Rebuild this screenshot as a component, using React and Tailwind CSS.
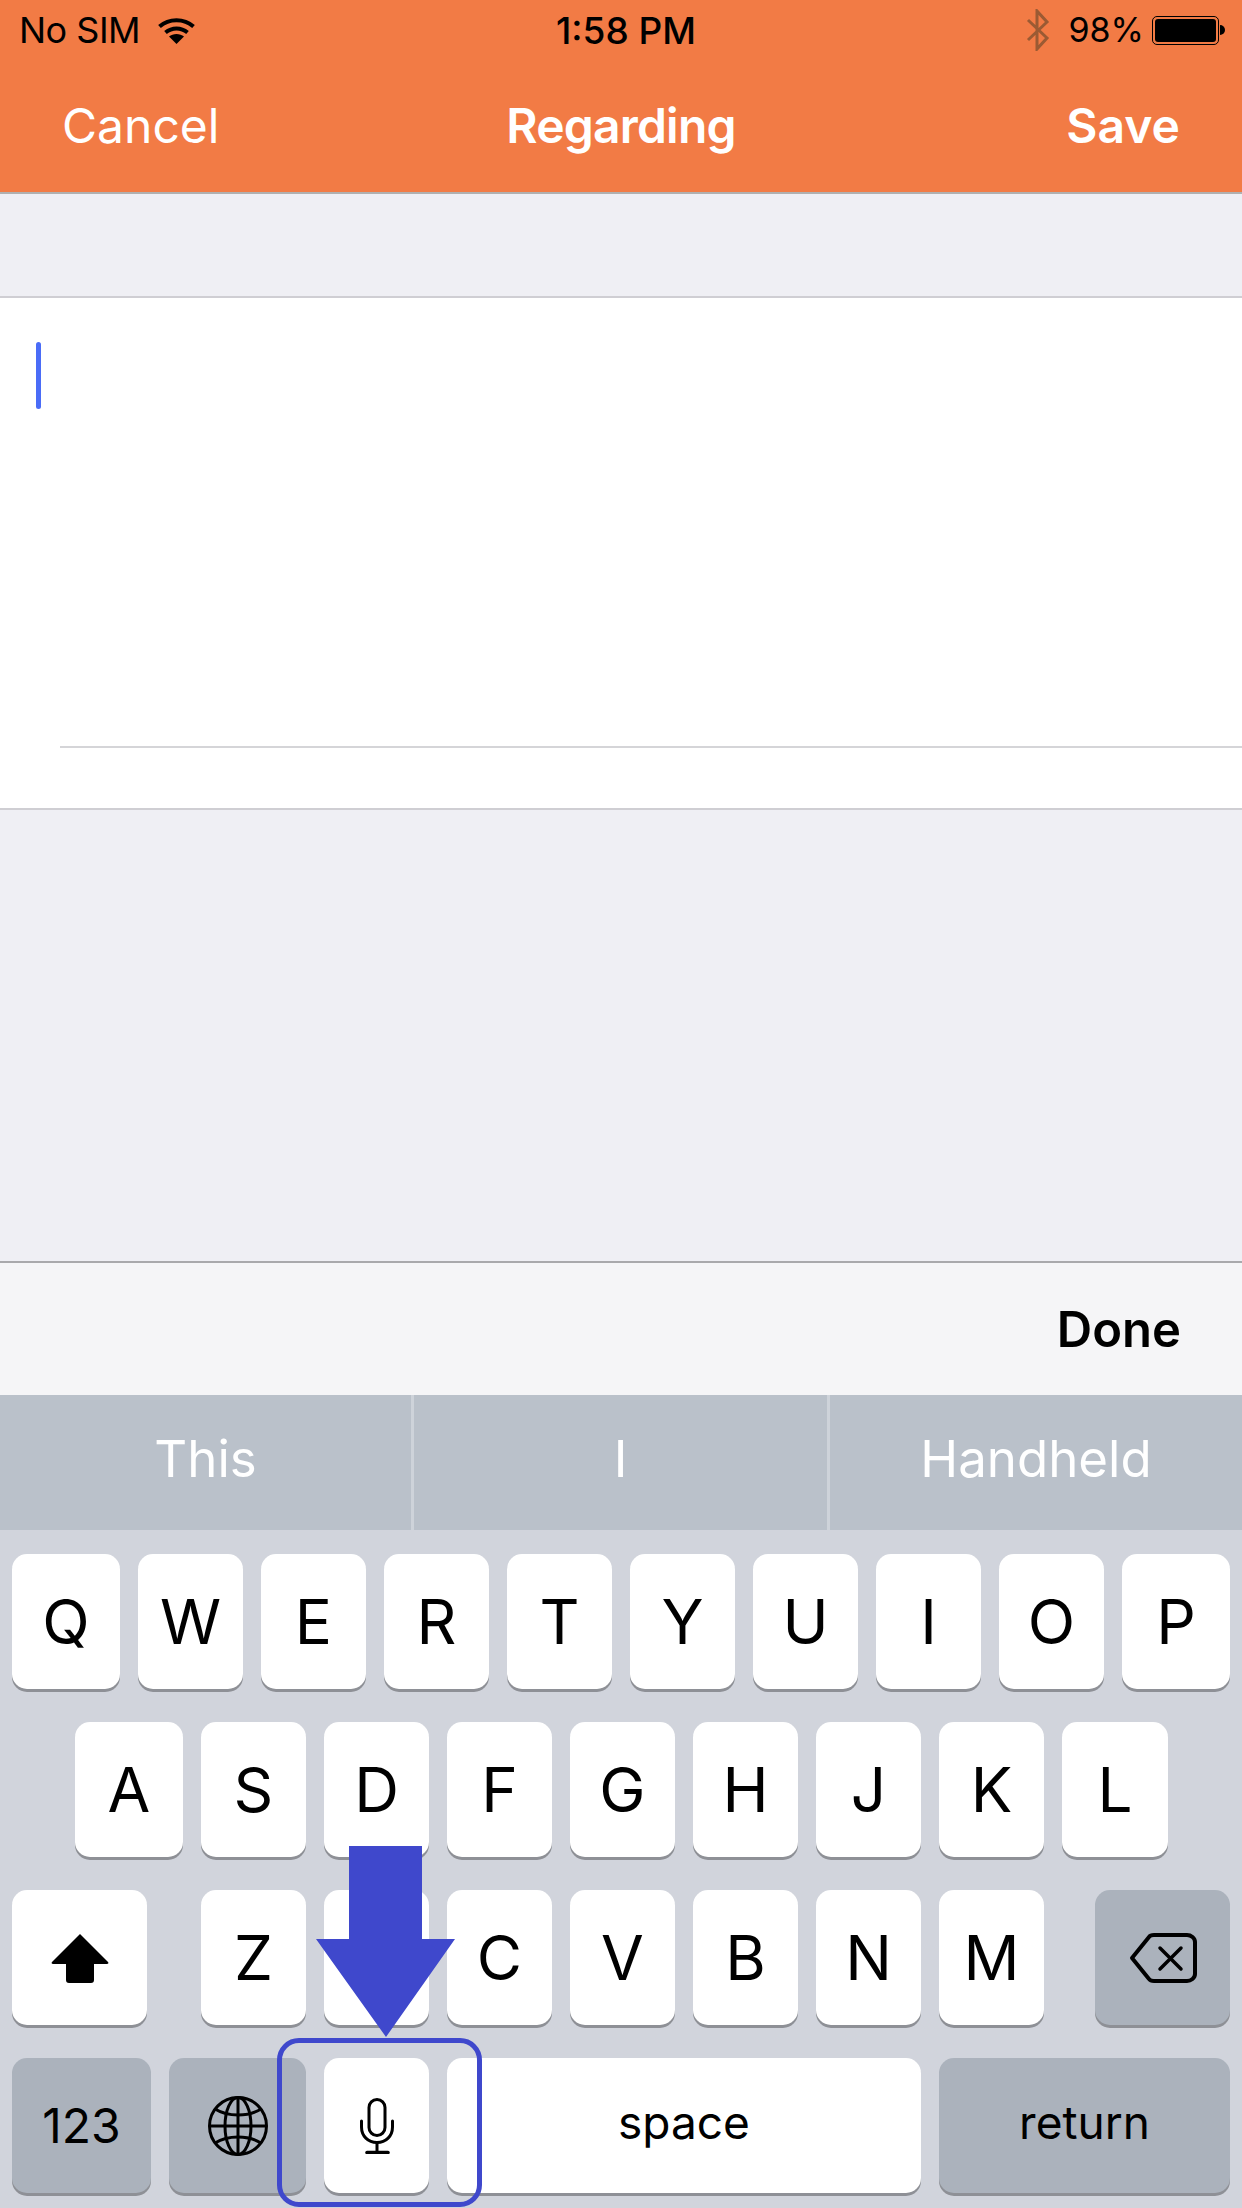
// App.jsx - iOS note editor with keyboard and callout

const FONT = "font-['Inter','Liberation_Sans',sans-serif]";

const Key = ({ label, w = 'w-[105px]', dark = false, size = 'text-[62px]', extra = '', children }) => (
  <div
    className={`${w} h-[135px] rounded-[15px] flex items-center justify-center text-black ${size} ${extra} font-normal leading-none shadow-[0_3px_0_#8e9096] ${
      dark ? 'bg-[#abb2bc]' : 'bg-white'
    }`}
  >
    {children || label}
  </div>
);

const Wifi = () => (
  <svg width="37" height="27" viewBox="0 0 37 27" className="ml-[18px]">
    <path d="M1.5 9.5C11 1 26 1 35.5 9.5" fill="none" stroke="#000" strokeWidth="4" />
    <path d="M7.5 15.5C14 10 23 10 29.5 15.5" fill="none" stroke="#000" strokeWidth="4" />
    <path d="M18.5 27L11 19.5C15 16 22 16 26 19.5Z" fill="#000" />
  </svg>
);

const Bluetooth = () => (
  <svg width="24" height="42" viewBox="0 0 24 42">
    <path d="M2 11L21 29L11 40V2L21 13L2 31" fill="none" stroke="#9b5a33" strokeWidth="3" />
  </svg>
);

const Battery = () => (
  <div className="flex items-center ml-[8px]">
    <div className="w-[67px] h-[29px] rounded-[5px] border border-black p-[2px]">
      <div className="w-full h-full rounded-[3px] bg-black" />
    </div>
    <div className="w-[5px] h-[10px] ml-[1px] rounded-r-full bg-black" />
  </div>
);

const ShiftIcon = () => (
  <svg width="58" height="50" viewBox="0 0 58 50">
    <path
      d="M29 1L57 29C58 30 57 31 56 31H43V47C43 49 42 50 40 50H18C16 50 15 49 15 47V31H2C1 31 0 30 1 29Z"
      fill="#000"
    />
  </svg>
);

const DeleteIcon = () => (
  <svg width="68" height="50" viewBox="0 0 68 50" fill="none" stroke="#000">
    <path
      d="M3 25L20 4C21 2.5 23 2 25 2H58C62 2 66 5 66 9V41C66 45 62 48 58 48H25C23 48 21 47.5 20 46Z"
      strokeWidth="4"
      strokeLinejoin="round"
    />
    <path d="M31 15L52 36M52 15L31 36" strokeWidth="3.5" strokeLinecap="round" />
  </svg>
);

const GlobeIcon = () => (
  <svg width="60" height="60" viewBox="0 0 60 60" fill="none" stroke="#000" strokeWidth="3">
    <circle cx="30" cy="30" r="28.5" />
    <ellipse cx="30" cy="30" rx="13" ry="28.5" />
    <path d="M30 1.5V58.5M1.5 30H58.5" />
    <path d="M7 13C20 21 40 21 53 13M7 47C20 39 40 39 53 47" />
  </svg>
);

const MicIcon = () => (
  <svg width="34" height="56" viewBox="0 0 34 56" fill="none" stroke="#000">
    <rect x="9" y="1.5" width="16" height="36" rx="8" strokeWidth="3" />
    <path d="M1.5 23V29C1.5 38 8 44.5 17 44.5C26 44.5 32.5 38 32.5 29V23" strokeWidth="3" strokeLinecap="round" />
    <path d="M17 44.5V54" strokeWidth="3" />
    <path d="M7 54.5H28" strokeWidth="3.5" strokeLinecap="round" />
  </svg>
);

const Row1 = ['W', 'E', 'R', 'T', 'Y', 'U', 'I', 'O'];
const Row2 = ['S', 'D', 'F', 'G', 'H', 'J', 'K'];
const Row3 = ['Z', 'X', 'C', 'V', 'B', 'N', 'M'];

export default function App() {
  return (
    <div className={`relative w-[1242px] h-[2208px] overflow-hidden flex flex-col bg-[#efeff4] ${FONT}`}>
      {/* Status + nav bar */}
      <div className="h-[194px] shrink-0 bg-[#f27b45] border-b-2 border-[#b0b0b0]">
        <div className="h-[60px] grid grid-cols-3 items-center text-[36px] leading-none text-black">
          <div className="flex items-center pl-[19px]">
            <span className="tracking-[-0.5px]">No SIM</span>
            <Wifi />
          </div>
          <div className="text-center font-medium text-[37px] pl-[10px]">1:58 PM</div>
          <div className="flex items-center justify-end pr-[17px]">
            <Bluetooth />
            <span className="ml-[18px] text-[34px]">98%</span>
            <Battery />
          </div>
        </div>
        <div className="h-[132px] grid grid-cols-3 items-center px-[62px] text-[48px] leading-none text-white">
          <span>Cancel</span>
          <span className="font-semibold text-center tracking-[-0.8px]">Regarding</span>
          <span className="font-semibold text-right">Save</span>
        </div>
      </div>

      {/* Form section */}
      <div className="h-[102px] shrink-0" />
      <div className="h-[514px] shrink-0 bg-white border-y-2 border-[#cfced3] flex flex-col">
        <div className="h-[448px] shrink-0 pl-[36px] pt-[44px]">
          <div className="w-[5px] h-[67px] rounded-full bg-[#4a6cf7]" />
        </div>
        <div className="ml-[60px] h-[2px] bg-[#d5d5d8]" />
      </div>
      <div className="flex-1" />

      {/* Keyboard accessory */}
      <div className="h-[134px] shrink-0 bg-[#f5f5f7] border-t-2 border-[#a9a9ac] flex items-center justify-end pr-[61px]">
        <span className="text-[49px] leading-none font-semibold text-black">Done</span>
      </div>

      {/* Suggestions */}
      <div className="h-[135px] shrink-0 bg-[#bac1ca] grid grid-cols-[414px_416px_1fr] text-[51px] leading-none text-white">
        <div className="flex items-center justify-center pb-[8px] border-r-[3px] border-[#ced3da]">This</div>
        <div className="flex items-center justify-center pb-[8px] border-r-[3px] border-[#ced3da]">I</div>
        <div className="flex items-center justify-center pb-[8px]">Handheld</div>
      </div>

      {/* Keyboard */}
      <div className="h-[678px] shrink-0 bg-[#d1d4dc] pt-[24px] flex flex-col gap-[33px]">
        <div className="flex gap-[18px] px-[12px]">
          <Key label="Q" w="w-[108px]" />
          {Row1.map((k) => (
            <Key key={k} label={k} />
          ))}
          <Key label="P" w="w-[108px]" />
        </div>
        <div className="flex gap-[18px] pl-[75px]">
          <Key label="A" w="w-[108px]" />
          {Row2.map((k) => (
            <Key key={k} label={k} />
          ))}
          <Key label="L" w="w-[106px]" />
        </div>
        <div className="flex items-center px-[12px]">
          <Key w="w-[135px]">
            <ShiftIcon />
          </Key>
          <div className="flex gap-[18px] ml-[54px] mr-[51px]">
            {Row3.map((k) => (
              <Key key={k} label={k} />
            ))}
          </div>
          <Key w="w-[135px]" dark>
            <DeleteIcon />
          </Key>
        </div>
        <div className="flex gap-[18px] px-[12px]">
          <Key w="w-[139px]" dark size="text-[48px]" label="123" />
          <Key w="w-[137px]" dark>
            <GlobeIcon />
          </Key>
          <Key>
            <MicIcon />
          </Key>
          <Key w="w-[474px]" size="text-[46px]" extra="pb-[8px]" label="space" />
          <Key w="w-[291px]" dark size="text-[46px]" extra="pb-[8px]" label="return" />
        </div>
      </div>

      {/* Callout over the mic key */}
      <svg width="140" height="192" viewBox="0 0 140 192" className="absolute left-[316px] top-[1846px]">
        <path d="M33 0H106V93H139L70 191L0 93H33Z" fill="#3f48cc" />
      </svg>
      <div className="absolute left-[277px] top-[2038px] w-[205px] h-[169px] rounded-[22px] border-[5px] border-[#3f48cc]" />
    </div>
  );
}
